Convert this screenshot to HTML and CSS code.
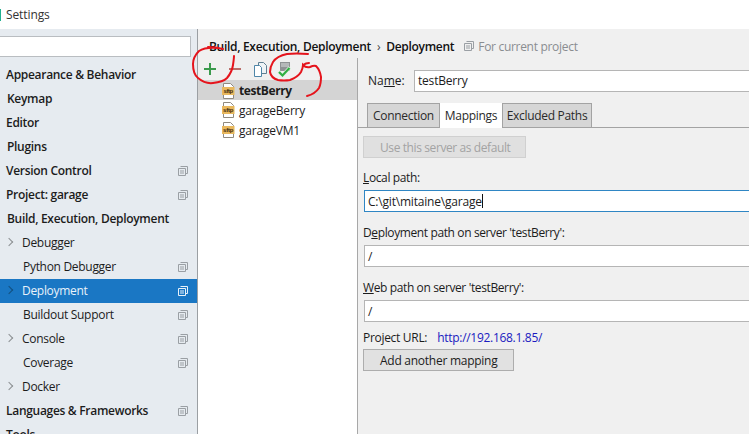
FILE: index.html
```html
<!DOCTYPE html>
<html lang="en">
<head>
  <meta charset="UTF-8" />
  <title>Settings</title>
  <link rel="stylesheet" href="styles.css">
</head>
<body>

  <svg class="defs" width="0" height="0">
    <symbol id="proj" viewBox="0 0 10 10">
      <path d="M2.5 .5h7v7h-2M.5 2.5h7v7h-7z" fill="none" stroke="currentColor"/>
      <path d="M2 5h4M2 7h4" stroke="currentColor"/>
    </symbol>
  </svg>

  <div class="titlebar">
    <span class="app-mark"></span>
    <span>Settings</span>
  </div>

  <div class="window">
    <div class="sidebar">
      <input class="search" type="text" />
      <ul class="tree">
        <li class="bold">Appearance &amp; Behavior</li>
        <li class="bold nudge">Keymap</li>
        <li class="bold">Editor</li>
        <li class="bold nudge">Plugins</li>
        <li class="bold">Version Control <svg class="proj"><use href="#proj"/></svg></li>
        <li class="bold">Project: garage <svg class="proj"><use href="#proj"/></svg></li>
        <li class="bold nudge">Build, Execution, Deployment</li>
        <li class="sub"><span class="arrow"></span>Debugger</li>
        <li class="sub leaf">Python Debugger <svg class="proj"><use href="#proj"/></svg></li>
        <li class="sub selected"><span class="arrow"></span>Deployment <svg class="proj"><use href="#proj"/></svg></li>
        <li class="sub leaf">Buildout Support <svg class="proj"><use href="#proj"/></svg></li>
        <li class="sub"><span class="arrow"></span>Console <svg class="proj"><use href="#proj"/></svg></li>
        <li class="sub leaf">Coverage <svg class="proj"><use href="#proj"/></svg></li>
        <li class="sub"><span class="arrow"></span>Docker</li>
        <li class="bold">Languages &amp; Frameworks <svg class="proj"><use href="#proj"/></svg></li>
        <li class="bold">Tools</li>
      </ul>
    </div>

    <div class="main">
      <div class="crumbs">
        <b>Build, Execution, Deployment</b>
        <span class="crumb-sep">›</span>
        <b>Deployment</b>
        <svg class="proj crumb-icon"><use href="#proj"/></svg>
        <span class="crumb-note">For current project</span>
      </div>

      <div class="panes">
        <div class="servers">
          <div class="toolbar">
            <svg class="tool tool-plus" viewBox="0 0 12 12"><path d="M6 0v12M0 6h12" stroke="#3b9a4c" stroke-width="2"/></svg>
            <svg class="tool tool-minus" viewBox="0 0 12 12"><path d="M0 6h12" stroke="#a8433e" stroke-width="1.500"/></svg>
            <svg class="tool tool-copy" viewBox="0 0 15 15">
              <path d="M5.500 .5h5l3 3v8h-8z" fill="#eef3f6" stroke="#5f7f92"/>
              <path d="M1.500 3.500h5l2 2v9h-7z" fill="#fff" stroke="#4f86a8"/>
            </svg>
            <svg class="tool tool-check" viewBox="0 0 15 16">
              <rect x="3" y="0" width="10" height="9" fill="#8f9294"/>
              <path d="M4 2h8M4 4h8" stroke="#dcdedf"/>
              <path d="M1.500 9.500l4 4 7.500-8" fill="none" stroke="#e4f2e4" stroke-width="3.500"/>
              <path d="M2 10l3.500 3.500 7-7.500" fill="none" stroke="#2fae42" stroke-width="2.200"/>
            </svg>
          </div>
          <ul class="server-list">
            <li class="active">
              <svg class="sftp" viewBox="0 0 13 16">
                <path d="M1.500 .5h7l3 3v12h-10z" fill="#fff" stroke="#8f8a80"/>
                <rect x="0" y="4" width="12.500" height="8" fill="#e8b85e"/>
                <text x="6.200" y="10.300" class="sftp-text">sftp</text>
              </svg>
              testBerry
            </li>
            <li>
              <svg class="sftp" viewBox="0 0 13 16">
                <path d="M1.500 .5h7l3 3v12h-10z" fill="#fff" stroke="#8f8a80"/>
                <rect x="0" y="4" width="12.500" height="8" fill="#e8b85e"/>
                <text x="6.200" y="10.300" class="sftp-text">sftp</text>
              </svg>
              garageBerry
            </li>
            <li>
              <svg class="sftp" viewBox="0 0 13 16">
                <path d="M1.500 .5h7l3 3v12h-10z" fill="#fff" stroke="#8f8a80"/>
                <rect x="0" y="4" width="12.500" height="8" fill="#e8b85e"/>
                <text x="6.200" y="10.300" class="sftp-text">sftp</text>
              </svg>
              garageVM1
            </li>
          </ul>
        </div>

        <div class="details">
          <div class="name-row">
            <label>Na<u>m</u>e:</label>
            <div class="field">testBerry</div>
          </div>
          <div class="tabs">
            <span class="tab tab-connection">Connection</span>
            <span class="tab tab-mappings current">Mappings</span>
            <span class="tab tab-excluded">Excluded Paths</span>
          </div>
          <div class="mapping">
            <div class="btn btn-default" >Use this server as default</div>
            <label class="path-label first"><u>L</u>ocal path:</label>
            <div class="field focused">C:\git\mitaine\garage<span class="caret"></span></div>
            <label class="path-label">D<u>e</u>ployment path on server 'testBerry':</label>
            <div class="field">/</div>
            <label class="path-label"><u>W</u>eb path on server 'testBerry':</label>
            <div class="field">/</div>
            <div class="url-row">
              <span>Project URL:</span>
              <a class="url">http://192.168.1.85/</a>
            </div>
            <div class="btn btn-add">Add another mapping</div>
          </div>
        </div>
      </div>
    </div>
  </div>

  <!-- red pen marks drawn over the screenshot -->
  <svg class="scribble" width="749" height="434" viewBox="0 0 749 434">
    <path d="M208 47q8 0 15 2M218 48q-13-1-19 3q-6 6-6 13q0 10 5 14q7 6 15 5q10-1 14-5q5-6 6-13q1-7 1-9"/>
    <path d="M308 54q-12-1-21 0q-10 2-14 8q-3 5-3 10q1 6 8 8q6 1 12 0q8-3 11-8q2-4 2-7q3 3 7 2q4-2 6-1q4 4 5 11q0 7-2 11q-4 6-12 8"/>
    <path d="M303 65q3-2 6-2"/>
  </svg>

</body>
</html>
```
FILE: styles.css
```css
* {
  box-sizing: border-box;
}
body {
  margin: 0;
  width: 749px;
  height: 434px;
  overflow: hidden;
  position: relative;
  background: #fff;
  color: #1c1c1c;
  font-family: "Open Sans", "Noto Sans", sans-serif;
  font-size: 12px;
}
ul {
  list-style: none;
  margin: 0;
  padding: 0;
}
.defs {
  position: absolute;
}
.sftp-text {
  font-family: "Liberation Sans", sans-serif;
  font-size: 6px;
  font-weight: bold;
  text-anchor: middle;
  fill: #3a2a10;
}

.titlebar {
  height: 29px;
  display: flex;
  align-items: center;
  gap: 5px;
  letter-spacing: -0.100px;
  color: #333;
}
.app-mark {
  width: 1px;
  height: 12px;
  background: #21b08f;
}

.window {
  display: flex;
  height: 405px;
}

.sidebar {
  width: 198px;
  flex: none;
  background: #e6ebf0;
  border-right: 1px solid #9b9fa3;
  padding-top: 7px;
}
.search {
  display: block;
  width: 191px;
  height: 21px;
  margin: 0 0 6px;
  background: #fff;
  border: 1px solid #b9bdc1;
  border-left: 0;
  outline: 0;
}
.tree li {
  height: 24px;
  display: flex;
  align-items: center;
  padding: 0 0 2px 6px;
  position: relative;
  white-space: nowrap;
  letter-spacing: -0.300px;
}
.tree .bold {
  font-weight: 600;
}
.tree .nudge {
  padding-left: 7px;
}
.tree .sub {
  padding-left: 6px;
}
.tree .leaf {
  padding-left: 23px;
}
.tree .selected {
  background: #1a77c4;
  color: #e8f2fa;
}
.arrow {
  width: 6px;
  height: 6px;
  margin-right: 10px;
  border-top: 1.500px solid #8c8f92;
  border-right: 1.500px solid #8c8f92;
  transform: rotate(45deg);
}
.selected .arrow {
  border-color: #12507f;
}
.proj {
  width: 10px;
  height: 10px;
  color: #9a9fa4;
}
.tree .proj {
  position: absolute;
  left: 178px;
  top: 7px;
}
.selected .proj {
  color: #e8f2fa;
}

.main {
  flex: 1;
  min-width: 0;
  background: #f0f0f0;
  display: flex;
  flex-direction: column;
}
.crumbs {
  height: 29px;
  padding: 5px 0 0 11px;
  display: flex;
  align-items: center;
  letter-spacing: -0.300px;
  white-space: nowrap;
}
.crumbs b {
  font-weight: 600;
  color: #111;
}
.crumb-sep {
  margin: 0 6px;
  color: #444;
}
.crumb-icon {
  margin: 0 4px 0 10px;
}
.crumb-note {
  color: #8a8d90;
}

.panes {
  flex: 1;
  display: flex;
  min-height: 0;
}
.servers {
  width: 160px;
  flex: none;
  background: #fff;
  border-right: 1px solid #a8a8a8;
  display: flex;
  flex-direction: column;
}
.toolbar {
  height: 22px;
  background: #f0f0f0;
  position: relative;
  flex: none;
}
.tool {
  position: absolute;
}
.tool-plus {
  left: 6px;
  top: 5px;
  width: 12px;
  height: 12px;
}
.tool-minus {
  left: 31px;
  top: 5px;
  width: 12px;
  height: 12px;
}
.tool-copy {
  left: 55px;
  top: 4px;
  width: 15px;
  height: 15px;
}
.tool-check {
  left: 79px;
  top: 4px;
  width: 15px;
  height: 16px;
}
.server-list li {
  height: 20px;
  display: flex;
  align-items: center;
  gap: 4px;
  padding-left: 24px;
  letter-spacing: -0.200px;
}
.server-list .active {
  background: #d4d4d4;
  font-weight: 700;
  letter-spacing: -0.400px;
  padding-top: 1px;
}
.sftp {
  width: 13px;
  height: 16px;
  flex: none;
}

.details {
  flex: 1;
  min-width: 0;
}
.name-row {
  display: flex;
  align-items: center;
  height: 21px;
  margin-top: 12px;
  padding-left: 10px;
}
.name-row label {
  width: 46px;
  flex: none;
}
.name-row .field {
  flex: 1;
  margin-right: -1px;
}
.field {
  height: 22px;
  background: #fff;
  border: 1px solid #b5b5b5;
  border-right: 0;
  padding-left: 3px;
  display: flex;
  align-items: center;
  letter-spacing: -0.200px;
}
.focused {
  border-color: #2f86c4;
}
.caret {
  width: 1px;
  height: 14px;
  background: #111;
}
.tabs {
  display: flex;
  margin: 12px 0 0;
  padding-left: 9px;
  height: 25px;
  border-bottom: 1px solid #a3a3a3;
}
.tab {
  height: 24px;
  display: flex;
  align-items: center;
  justify-content: center;
  background: #d6d6d6;
  border: 1px solid #a3a3a3;
  border-bottom: 0;
  letter-spacing: -0.300px;
  color: #2a2a2a;
}
.tab-connection {
  width: 73px;
}
.tab-mappings {
  width: 62px;
}
.tab-excluded {
  width: 90px;
}
.tab.current {
  background: #fff;
  border: 0;
  height: 25px;
  margin-bottom: -1px;
}
.mapping {
  padding: 8px 0 0 5px;
  display: flex;
  flex-direction: column;
  align-items: stretch;
}
.mapping .field {
  margin-left: 1px;
}
.btn {
  height: 22px;
  display: flex;
  align-items: center;
  padding-left: 16px;
  background: #e1e1e1;
  border: 1px solid #adadad;
  letter-spacing: -0.260px;
}
.btn-default {
  width: 163px;
  color: #a3a3a3;
  border-color: #d0d0d0;
  background: #e0e0e0;
  letter-spacing: -0.400px;
}
.btn-add {
  width: 151px;
  margin-top: 2px;
}
.path-label {
  height: 17px;
  margin: 12px 0 4px;
  display: flex;
  align-items: center;
  white-space: pre;
  letter-spacing: -0.380px;
}
.path-label.first {
  margin-top: 11px;
}
.url-row {
  height: 20px;
  margin-top: 5px;
  display: flex;
  align-items: center;
  gap: 10px;
  letter-spacing: -0.300px;
}
.url {
  color: #1a1ac0;
}

.scribble {
  position: absolute;
  left: 0;
  top: 0;
  pointer-events: none;
}
.scribble path {
  fill: none;
  stroke: #e5141c;
  stroke-width: 2;
  stroke-linecap: round;
}
```
